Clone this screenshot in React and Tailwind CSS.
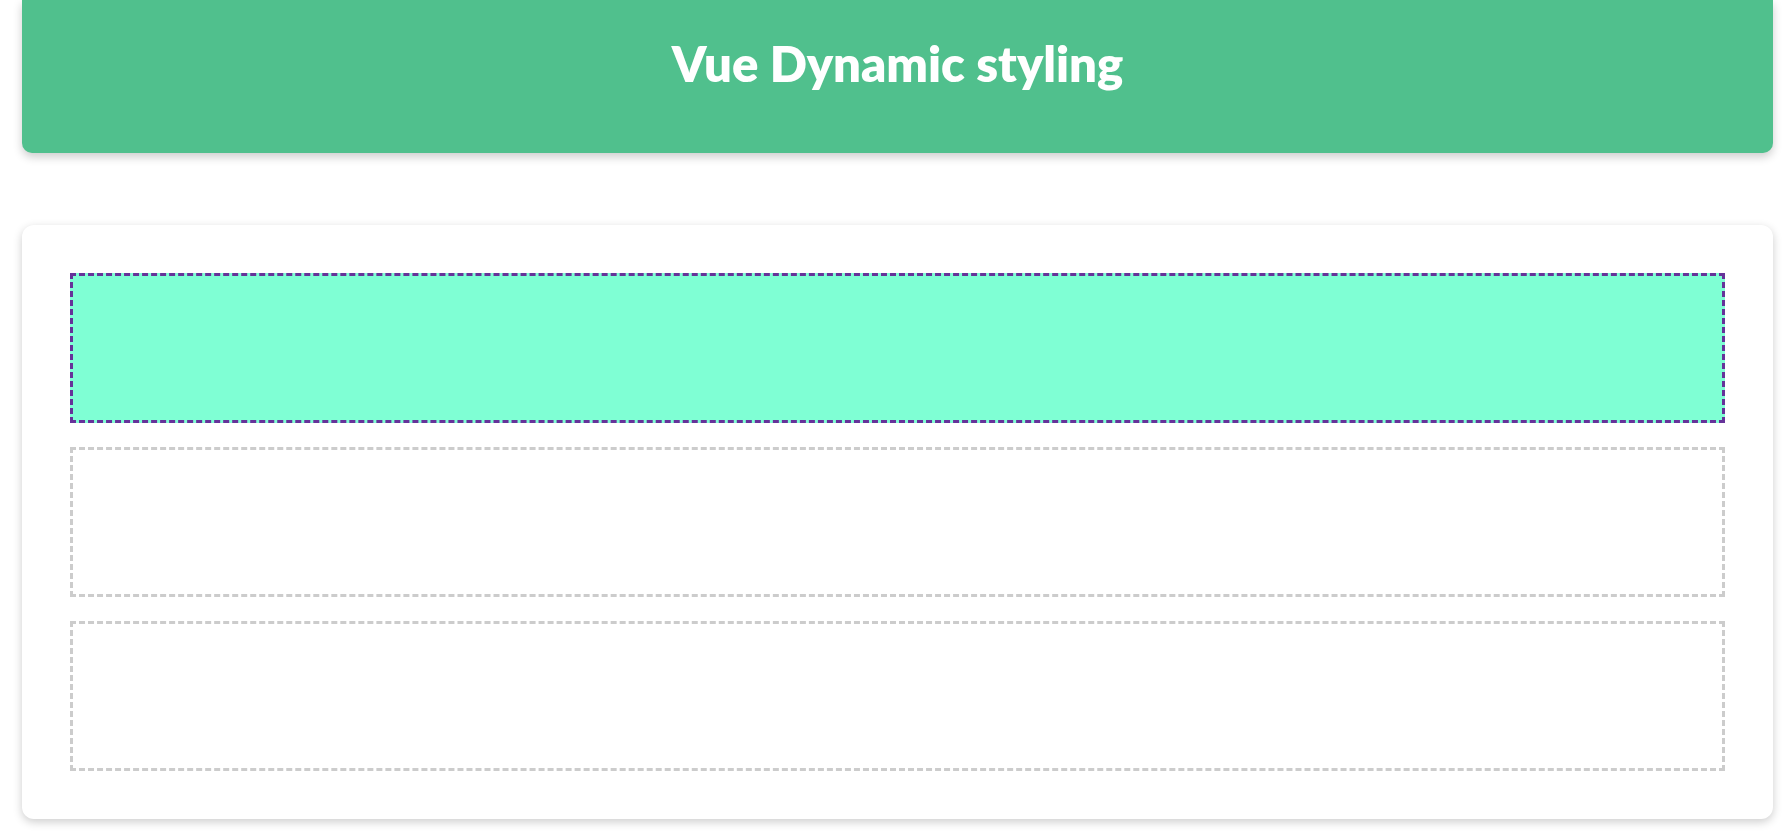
export default function App() {
  const boxes = [
    { active: true },
    { active: false },
    { active: false },
  ];

  return (
    <div className="min-h-screen bg-white font-['Lato',sans-serif]">
      <div className="pl-[22px] pr-[10px]">
        {/* Header */}
        <header className="h-[153px] rounded-b-[10px] bg-[#50c08d] shadow-[0_4px_10px_rgba(0,0,0,0.2)] flex justify-center pt-[35px]">
          <h1 className="text-white font-extrabold text-[49px] leading-[56px] h-[56px]">
            Vue Dynamic styling
          </h1>
        </header>

        {/* Boxes card */}
        <section className="mt-[72px] rounded-[12px] bg-white shadow-[0_3px_10px_rgba(0,0,0,0.2)] p-12 flex flex-col gap-6">
          {boxes.map((box, i) => (
            <div
              key={i}
              className={
                box.active
                  ? 'h-[150px] border-[3px] border-dashed border-[#663399] bg-[#7fffd4]'
                  : 'h-[150px] border-[3px] border-dashed border-[#cccccc] bg-white'
              }
            />
          ))}
        </section>
      </div>
    </div>
  );
}
